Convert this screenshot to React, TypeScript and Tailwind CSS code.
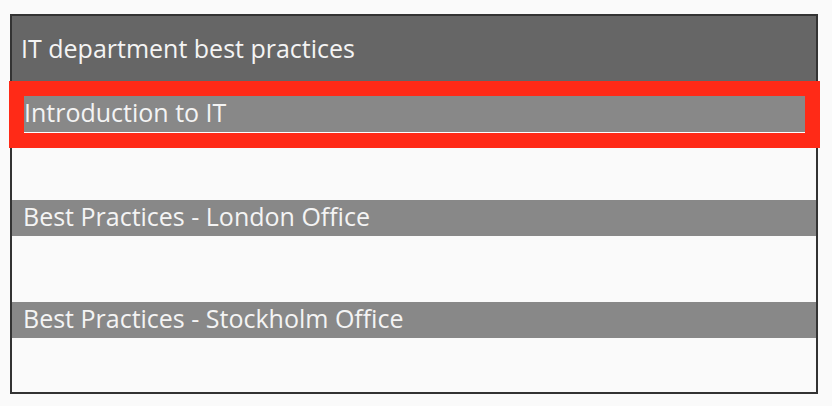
import React from 'react';

const items = ['Introduction to IT', 'Best Practices - London Office', 'Best Practices - Stockholm Office'];

export default function App(): React.JSX.Element {
  return (
    <div className="min-h-[406px] w-[832px] bg-[#fafafa] pt-[14px] pl-[10px] font-['Open_Sans',sans-serif]">
      <div className="w-[808px] h-[380px] border-2 border-[#333333] bg-[#fafafa] flex flex-col">
        {/* Header */}
        <div className="h-[65px] bg-[#666666] flex items-center pl-[9px] pt-[1px] text-[25px] text-[#f4f4f4]">
          IT department best practices
        </div>

        {/* Selected item */}
        <div className="-ml-[3px] -mr-[4px] border-[15px] border-[#ff2a17]">
          <div className="h-[37px] bg-[#888888] border-b border-white flex items-center pb-[3px] text-[25px] text-[#f4f4f4] leading-none">
            {items[0]}
          </div>
        </div>

        {/* Other items */}
        <div className="mt-[52px] h-[36px] bg-[#888888] flex items-center pl-[11px] pb-[2px] text-[25px] text-[#f4f4f4]">
          {items[1]}
        </div>
        <div className="mt-[66px] h-[36px] bg-[#888888] flex items-center pl-[11px] pb-[2px] text-[25px] text-[#f4f4f4]">
          {items[2]}
        </div>
      </div>
    </div>
  );
}
